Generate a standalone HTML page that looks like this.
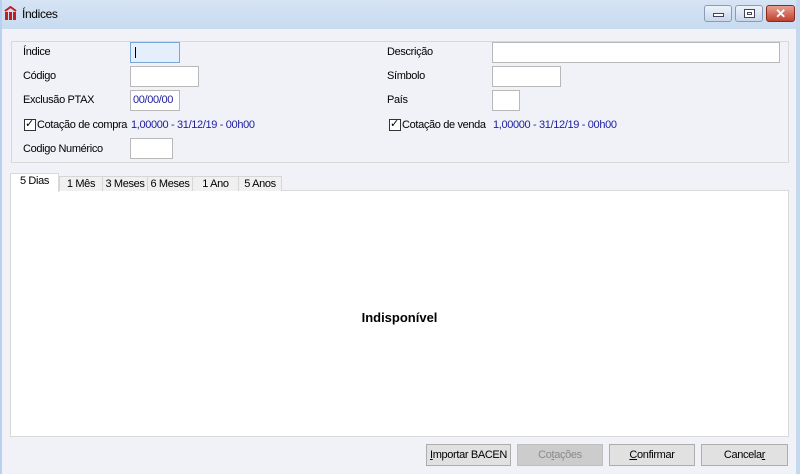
<!DOCTYPE html>
<html><head><style>
*{box-sizing:border-box;margin:0;padding:0}
body{width:800px;height:474px;overflow:hidden;background:#f0f2f8;font-family:"Liberation Sans",sans-serif;font-size:11px;letter-spacing:-0.35px;color:#000;position:relative}
.abs{position:absolute}
.title{left:0;top:0;width:800px;height:29px;background:linear-gradient(#d6e4f4,#c8dbef);}
.lb{position:absolute;left:0;top:0;width:2px;height:474px;background:#b9d1ee}
.rb{position:absolute;right:0;top:0;width:4px;height:474px;background:#c4d8ee}
.inp{position:absolute;background:#fff;border:1px solid #b8b8b8;height:21px}
.lbl{position:absolute;font-size:11px;white-space:nowrap}
.blue{color:#2020a0}
.chk{position:absolute;width:12px;height:12px;border:1px solid #333;background:#fff}
.tab{position:absolute;top:176px;height:15px;background:#f0f0f0;border:1px solid #d6d6d6;border-bottom:none;font-size:11px;text-align:center;line-height:14px}
.btn{position:absolute;top:444px;height:22px;background:#e1e1e1;border:1px solid #adadad;text-align:center;line-height:20px;font-size:11px}
.wb{position:absolute;top:5px;height:17px;border:1px solid #8a9cb4;border-radius:3px;background:linear-gradient(#eef3fa,#c8d7ea)}
</style></head><body>
<div class="abs title"></div>
<div class="lb"></div><div class="rb"></div>
<svg class="abs" style="left:4px;top:6px" width="13" height="15" viewBox="0 0 13 15"><path d="M1 5 L6.5 1 L12 5" fill="none" stroke="#c02020" stroke-width="2"/><rect x="1" y="6" width="3" height="8" fill="#c02020"/><rect x="5" y="6" width="3" height="8" fill="#c02020"/><rect x="9" y="6" width="3" height="8" fill="#c02020"/></svg>
<div class="abs" style="left:22px;top:7px;font-size:12px">Índices</div>
<div class="wb" style="left:704px;width:28px"><div style="position:absolute;left:8px;top:7px;width:11px;height:4px;background:#fff;border:1px solid #445"></div></div>
<div class="wb" style="left:735px;width:28px"><div style="position:absolute;left:8px;top:3px;width:11px;height:9px;border:1px solid #445;background:#fff"><div style="margin:2px;height:3px;border:1px solid #445"></div></div></div>
<div class="wb" style="left:766px;width:29px;background:linear-gradient(#e8a090,#c04030);border-color:#8a2a1a;color:#fff;text-align:center;font-weight:bold;font-size:13px;line-height:15px">✕</div>

<div class="abs" style="left:11px;top:41px;width:778px;height:122px;border:1px solid #d8d8d8;background:#f0f2f8"></div>
<div class="lbl" style="left:23px;top:46px">Índice</div>
<div class="inp" style="left:130px;top:42px;width:50px;background:#e5eefb;border-color:#7aa7d8"><div style="position:absolute;left:4px;top:4px;width:1px;height:11px;background:#000"></div></div>
<div class="lbl" style="left:23px;top:70px">Código</div>
<div class="inp" style="left:130px;top:66px;width:69px"></div>
<div class="lbl" style="left:23px;top:94px">Exclusão PTAX</div>
<div class="inp blue" style="left:130px;top:90px;width:50px;padding:3px 0 0 2px">00/00/00</div>
<div class="chk" style="left:24px;top:119px"></div><div class="lbl" style="left:25px;top:117px">✓</div>
<div class="lbl" style="left:37px;top:119px">Cotação de compra</div>
<div class="lbl blue" style="left:131px;top:119px">1,00000 - 31/12/19 - 00h00</div>
<div class="lbl" style="left:23px;top:143px">Codigo Numérico</div>
<div class="inp" style="left:130px;top:138px;width:43px"></div>

<div class="lbl" style="left:387px;top:46px">Descrição</div>
<div class="inp" style="left:492px;top:42px;width:288px"></div>
<div class="lbl" style="left:387px;top:70px">Símbolo</div>
<div class="inp" style="left:492px;top:66px;width:69px"></div>
<div class="lbl" style="left:387px;top:94px">País</div>
<div class="inp" style="left:492px;top:90px;width:28px"></div>
<div class="chk" style="left:389px;top:119px"></div><div class="lbl" style="left:390px;top:117px">✓</div>
<div class="lbl" style="left:402px;top:119px">Cotação de venda</div>
<div class="lbl blue" style="left:493px;top:119px">1,00000 - 31/12/19 - 00h00</div>

<div class="abs" style="left:10px;top:190px;width:779px;height:247px;background:#fff;border:1px solid #d9d9d9"></div>
<div class="tab" style="left:59px;width:44px">1 Mês</div>
<div class="tab" style="left:102px;width:46px">3 Meses</div>
<div class="tab" style="left:147px;width:46px">6 Meses</div>
<div class="tab" style="left:192px;width:47px">1 Ano</div>
<div class="tab" style="left:238px;width:44px">5 Anos</div>
<div class="tab" style="left:10px;top:173px;width:49px;height:19px;background:#fff;border-color:#d9d9d9;line-height:14px">5 Dias</div>
<div class="abs" style="left:10px;top:310px;width:779px;text-align:center;font-weight:bold;font-size:13px;letter-spacing:0">Indisponível</div>

<div class="btn" style="left:426px;width:85px"><u>I</u>mportar BACEN</div>
<div class="btn" style="left:517px;width:86px;background:#cccccc;border-color:#bfbfbf;color:#8a8a8a">Co<u>t</u>ações</div>
<div class="btn" style="left:609px;width:86px"><u>C</u>onfirmar</div>
<div class="btn" style="left:701px;width:87px">Cancela<u>r</u></div>
</body></html>
